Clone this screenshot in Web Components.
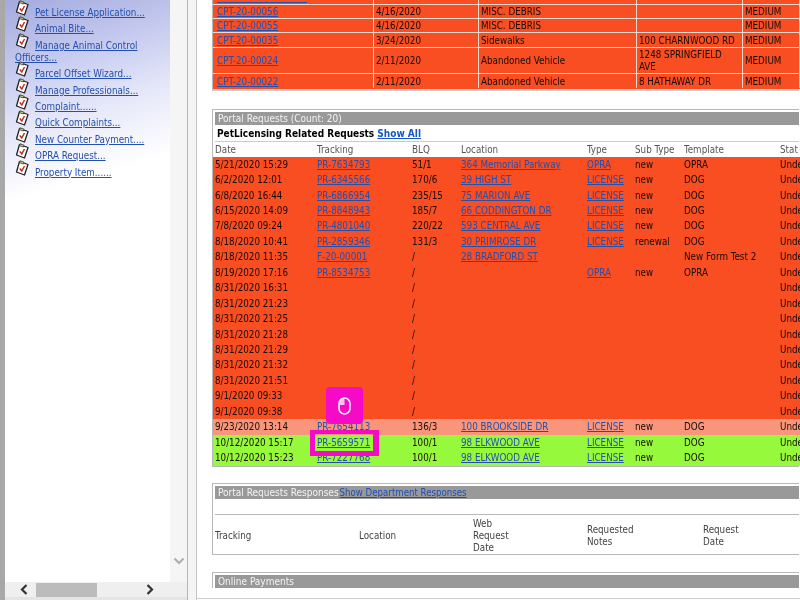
<!DOCTYPE html>
<html>
<head>
<meta charset="utf-8">
<title>Portal Requests</title>
<style>
    html, body { margin: 0; padding: 0; background: #fff; }
    body { width: 800px; height: 600px; overflow: hidden; }
</style>
</head>
<body>
<app-shell>
    <side-nav slot="side">
        <nav-item>Pet License Application...</nav-item>
        <nav-item>Animal Bite...</nav-item>
        <nav-item>Manage Animal Control Officers...</nav-item>
        <nav-item>Parcel Offset Wizard...</nav-item>
        <nav-item>Manage Professionals...</nav-item>
        <nav-item>Complaint......</nav-item>
        <nav-item>Quick Complaints...</nav-item>
        <nav-item>New Counter Payment....</nav-item>
        <nav-item>OPRA Request...</nav-item>
        <nav-item>Property Item......</nav-item>
    </side-nav>
    <complaint-table></complaint-table>
    <portal-requests></portal-requests>
    <portal-responses></portal-responses>
    <data-panel title="Online Payments" class="last"></data-panel>
    <click-marker slot="overlay"></click-marker>
</app-shell>

<script>
const FONT = '"DejaVu Sans Condensed", Roboto, sans-serif';
const LINK = '#2350ad';

// Outer frame: left menu, splitter, scrolled main area
customElements.define('app-shell', class AppShell extends HTMLElement {
    constructor() {
        super();
        this.attachShadow({mode: 'open'}).innerHTML = `
            <style>
                :host { display: grid; grid-template-columns: 187px 10px 1fr; width: 800px; height: 600px; position: relative; overflow: hidden; background: #fff; font: 9.750px ${FONT}; color: #160c08; filter: blur(0.3px); }
                .splitter { background: #f4f4f4; border-left: 1px solid #b5b5b5; border-right: 1px solid #c4c4c4; }
                main { overflow: hidden; display: flex; flex-direction: column; padding: 0 1px 0 15px; height: 598px; border-bottom: 1px solid #ccc; }
            </style>
            <slot name="side"></slot>
            <div class="splitter"></div>
            <main><slot></slot></main>
            <slot name="overlay"></slot>
        `;
    }
});

customElements.define('side-nav', class SideNav extends HTMLElement {
    constructor() {
        super();
        this.attachShadow({mode: 'open'}).innerHTML = `
            <style>
                :host { display: grid; grid-template-columns: 1fr 17px; grid-template-rows: 1fr 15px 3px; height: 600px; border-left: 5px solid #a8a8a8; box-sizing: border-box; background: #fff; }
                .list { background: linear-gradient(163deg, #a3aadd 0, #c6caef 70px, #e6e8f9 130px, #fff 195px); display: flex; flex-direction: column; overflow: hidden; }
                .track { background: #f5f5f5; display: flex; align-items: flex-end; justify-content: center; padding-bottom: 17px; }
                .hbar { grid-column: 1 / 3; background: #efefef; display: flex; align-items: center; padding-left: 15px; }
                .foot { grid-column: 1 / 3; background: #e4e4e4; }
                .thumb { width: 61px; height: 14px; background: #bcbcbc; margin-left: 8px; }
                .right { margin-left: 49px; }
                svg { display: block; }
            </style>
            <div class="list"><slot></slot></div>
            <div class="track">
                <svg width="12" height="8" viewBox="0 0 12 8"><path d="M1.500 1.500L6 6l4.500-4.500" fill="none" stroke="#adadad" stroke-width="2"/></svg>
            </div>
            <div class="hbar">
                <svg width="8" height="11" viewBox="0 0 8 11"><path d="M6.500 1L2 5.500 6.500 10" fill="none" stroke="#333" stroke-width="2.200"/></svg>
                <div class="thumb"></div>
                <svg class="right" width="8" height="11" viewBox="0 0 8 11"><path d="M1.500 1L6 5.500 1.500 10" fill="none" stroke="#333" stroke-width="2.200"/></svg>
            </div>
            <div class="foot"></div>
        `;
    }
});

customElements.define('nav-item', class NavItem extends HTMLElement {
    constructor() {
        super();
        this.attachShadow({mode: 'open'}).innerHTML = `
            <style>
                :host { display: block; line-height: 12px; padding: 3.400px 0 0 10px; width: 150px; }
                :host(:first-child) { padding-top: 6px; }
                a { color: ${LINK}; text-decoration: underline; }
                svg { display: inline-block; vertical-align: -1px; margin: -6px 5px 0 0; }
            </style>
            <svg width="15" height="17" viewBox="0 0 15 17">
                <path d="M4.500 1.500l8.500 3-3.500 10.500L1.500 12z" fill="#fff" stroke="#222" stroke-width="1.300" stroke-linejoin="round"/>
                <path d="M5 .8l4 1.400-.6 1.800-4-1.400z" fill="#d8d070" stroke="#333" stroke-width=".8"/>
                <path d="M4.800 8.500l2 2.500 2.700-5" fill="none" stroke="#c8281c" stroke-width="1.500"/>
            </svg><a href="#"><slot></slot></a>
        `;
    }
});

// Box with a grey border and a grey title bar
customElements.define('data-panel', class DataPanel extends HTMLElement {
    constructor() {
        super();
        const title = this.getAttribute('title') || '';
        this.attachShadow({mode: 'open'}).innerHTML = `
            <style>
                :host { display: block; flex: none; border: 1px solid #b8b8b8; border-right: 0; padding: 2px 0 0 2px; }
                :host(.last) { border-bottom: 0; margin-top: 17px; }
                .bar { background: #999; color: #f4f4f4; font-size: 10px; height: 13px; line-height: 13px; padding-left: 3px; white-space: nowrap; }
            </style>
            <div class="bar">${title}<slot name="bar"></slot></div>
            <slot></slot>
        `;
    }
});

customElements.define('complaint-table', class ComplaintTable extends HTMLElement {
    constructor() {
        super();
        const rows = [
            [14, 'CPT-20-00056', '4/16/2020', 'MISC. DEBRIS', '', 'MEDIUM'],
            [14, 'CPT-20-00055', '4/16/2020', 'MISC. DEBRIS', '', 'MEDIUM'],
            [15, 'CPT-20-00035', '3/24/2020', 'Sidewalks', '100 CHARNWOOD RD', 'MEDIUM'],
            [26, 'CPT-20-00024', '2/11/2020', 'Abandoned Vehicle', '1248 SPRINGFIELD AVE', 'MEDIUM'],
            [15, 'CPT-20-00022', '2/11/2020', 'Abandoned Vehicle', '8 HATHAWAY DR', 'MEDIUM']
        ];
        const body = rows.map((r) => `<tr style="height:${r[0]}px">
            <td><a href="#">${r[1]}</a></td><td>${r[2]}</td><td>${r[3]}</td><td class="addr">${r[4]}</td><td>${r[5]}</td>
        </tr>`).join('');
        this.attachShadow({mode: 'open'}).innerHTML = `
            <style>
                :host { display: block; flex: none; border-left: 1px solid #b8b8b8; border-bottom: 2px solid #ccc; }
                table { border-collapse: collapse; table-layout: fixed; width: 586px; }
                td { background: #f94d22; border: 1px solid #f3d9cd; padding: 1px 0 0 2px; line-height: 12px; vertical-align: middle; box-sizing: border-box; }
                td:first-child { border-left-color: #f94d22; padding-left: 3px; }
                td.addr { padding-right: 6px; }
                tr:last-child td { border-bottom-color: #f94d22; }
                .stub td { border-top: 0; height: 4px; padding: 0; }
                .stub div { width: 90px; height: 1px; margin: 2px 0 1px 3px; background: ${LINK}; }
                a { color: ${LINK}; }
            </style>
            <table>
                <colgroup><col width="160"><col width="105"><col width="158"><col width="106"><col width="57"></colgroup>
                <tr class="stub"><td><div></div></td><td></td><td></td><td></td><td></td></tr>
                ${body}
            </table>
        `;
    }
});

customElements.define('portal-requests', class PortalRequests extends HTMLElement {
    constructor() {
        super();
        const RED = 'r', PINK = 'p', GREEN = 'g';
        const rows = [
            [RED, '5/21/2020 15:29', 'PR-7634793', '51/1', '364 Memorial Parkway', 'OPRA', 'new', 'OPRA'],
            [RED, '6/2/2020 12:01', 'PR-6345566', '170/6', '39 HIGH ST', 'LICENSE', 'new', 'DOG'],
            [RED, '6/8/2020 16:44', 'PR-6866954', '235/15', '75 MARION AVE', 'LICENSE', 'new', 'DOG'],
            [RED, '6/15/2020 14:09', 'PR-8848943', '185/7', '66 CODDINGTON DR', 'LICENSE', 'new', 'DOG'],
            [RED, '7/8/2020 09:24', 'PR-4801040', '220/22', '593 CENTRAL AVE', 'LICENSE', 'new', 'DOG'],
            [RED, '8/18/2020 10:41', 'PR-2859346', '131/3', '30 PRIMROSE DR', 'LICENSE', 'renewal', 'DOG'],
            [RED, '8/18/2020 11:35', 'F-20-00001', '/', '28 BRADFORD ST', '', '', 'New Form Test 2'],
            [RED, '8/19/2020 17:16', 'PR-8534753', '/', '', 'OPRA', 'new', 'OPRA'],
            [RED, '8/31/2020 16:31', '', '/', '', '', '', ''],
            [RED, '8/31/2020 21:23', '', '/', '', '', '', ''],
            [RED, '8/31/2020 21:25', '', '/', '', '', '', ''],
            [RED, '8/31/2020 21:28', '', '/', '', '', '', ''],
            [RED, '8/31/2020 21:29', '', '/', '', '', '', ''],
            [RED, '8/31/2020 21:32', '', '/', '', '', '', ''],
            [RED, '8/31/2020 21:51', '', '/', '', '', '', ''],
            [RED, '9/1/2020 09:33', '', '/', '', '', '', ''],
            [RED, '9/1/2020 09:38', '', '/', '', '', '', ''],
            [PINK, '9/23/2020 13:14', 'PR-7654113', '136/3', '100 BROOKSIDE DR', 'LICENSE', 'new', 'DOG'],
            [GREEN, '10/12/2020 15:17', 'PR-5659571', '100/1', '98 ELKWOOD AVE', 'LICENSE', 'new', 'DOG'],
            [GREEN, '10/12/2020 15:23', 'PR-7227768', '100/1', '98 ELKWOOD AVE', 'LICENSE', 'new', 'DOG']
        ];
        const link = (t) => (t ? `<a href="#">${t}</a>` : '');
        const body = rows.map((r) => `<tr class="${r[0]}">
            <td>${r[1]}</td><td>${link(r[2])}</td><td>${r[3]}</td><td>${link(r[4])}</td>
            <td>${link(r[5])}</td><td>${r[6]}</td><td>${r[7]}</td><td>Unde</td>
        </tr>`).join('');
        this.attachShadow({mode: 'open'}).innerHTML = `
            <style>
                :host { display: block; flex: none; margin-top: 18px; }
                .sub { height: 16px; line-height: 17px; padding-left: 2px; font-size: 10px; font-weight: bold; color: #000; border-bottom: 1px solid #ccc; }
                .sub a { color: #1456c8; }
                table { border-collapse: collapse; table-layout: fixed; width: 587px; margin-left: -2px; }
                th { font-weight: normal; color: #555; text-align: left; height: 15px; padding: 0 0 0 2px; line-height: 15px; white-space: nowrap; overflow: hidden; }
                td { height: 15.450px; padding: 0 0 0 2px; line-height: 12px; white-space: nowrap; overflow: hidden; }
                tr.r td { background: #f94d22; }
                tr.p td { background: #f9957b; }
                tr.g td { background: #97f93c; }
                a { color: ${LINK}; }
            </style>
            <data-panel title="Portal Requests (Count: 20)">
                <div class="sub">PetLicensing Related Requests <a href="#">Show All</a></div>
                <table>
                    <colgroup><col width="102"><col width="95"><col width="49"><col width="126"><col width="48"><col width="49"><col width="96"><col width="22"></colgroup>
                    <tr><th>Date</th><th>Tracking</th><th>BLQ</th><th>Location</th><th>Type</th><th>Sub Type</th><th>Template</th><th>Stat</th></tr>
                    ${body}
                </table>
            </data-panel>
        `;
    }
});

customElements.define('portal-responses', class PortalResponses extends HTMLElement {
    constructor() {
        super();
        this.attachShadow({mode: 'open'}).innerHTML = `
            <style>
                :host { display: block; flex: none; margin-top: 16px; }
                .gap { height: 15px; border-bottom: 1px solid #b8b8b8; }
                .bar-link { color: #1e4fb4; font-size: 9.600px; text-decoration: underline; margin-left: 1px; }
                table { border-collapse: collapse; table-layout: fixed; width: 587px; margin-left: -2px; }
                th { font-weight: normal; color: #444; text-align: left; padding: 3px 0 0 2px; height: 36px; line-height: 12px; }
            </style>
            <data-panel title="Portal Requests Responses">
                <a class="bar-link" slot="bar" href="#">Show Department Responses</a>
                <div class="gap"></div>
                <table>
                    <colgroup><col width="144"><col width="114"><col width="114"><col width="116"><col width="99"></colgroup>
                    <tr><th>Tracking</th><th>Location</th><th>Web<br>Request<br>Date</th><th>Requested<br>Notes</th><th>Request<br>Date</th></tr>
                </table>
            </data-panel>
        `;
    }
});

// Tutorial marker: mouse badge and highlight round the clicked link
customElements.define('click-marker', class ClickMarker extends HTMLElement {
    constructor() {
        super();
        this.attachShadow({mode: 'open'}).innerHTML = `
            <style>
                :host { display: block; position: absolute; left: 310px; top: 387px; width: 70px; height: 70px; }
                .badge { position: absolute; left: 16px; top: 0; width: 37px; height: 37px; border-radius: 4px; background: #f50ac8; display: flex; align-items: center; justify-content: center; }
                .box { position: absolute; left: 0; top: 43px; width: 69px; height: 26px; box-sizing: border-box; border: solid #f50ac8; border-width: 4px 6px 5px 5px; }
            </style>
            <div class="badge">
                <svg width="13" height="18" viewBox="0 0 13 18">
                    <rect x="1" y="1" width="11" height="16" rx="5.500" fill="none" stroke="#fff" stroke-width="1.500"/>
                    <path d="M6.500 1A5.500 5.500 0 0 0 1 6.500V8h5.500z" fill="#fff" fill-opacity=".75"/>
                </svg>
            </div>
            <div class="box"></div>
        `;
    }
});
</script>
</body>
</html>
